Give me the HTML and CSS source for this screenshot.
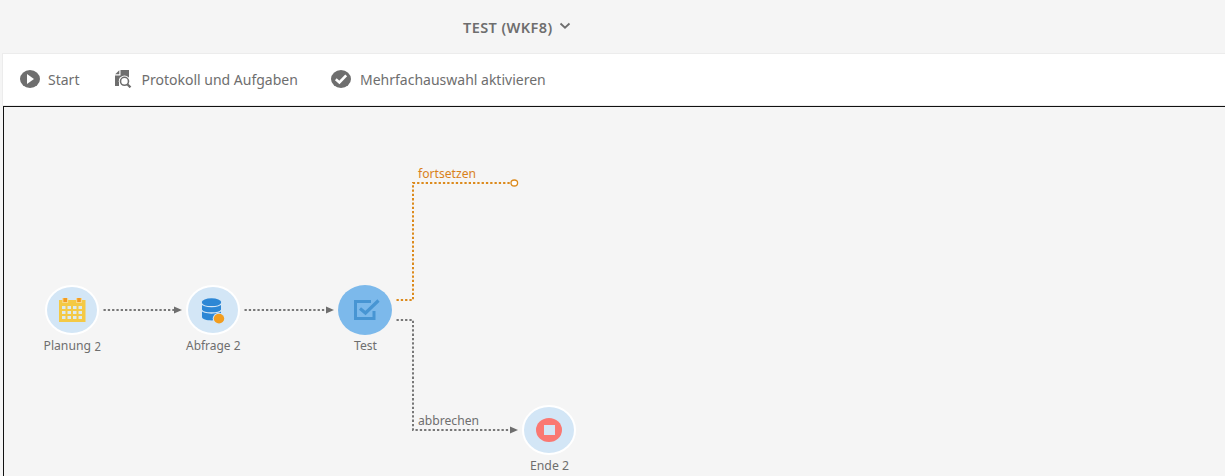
FILE: index.html
```html
<!DOCTYPE html>
<html lang="de">
<head>
<meta charset="utf-8">
<title>TEST (WKF8)</title>
<link rel="stylesheet" href="styles.css">
</head>
<body>
<div class="app">
  <header class="header">
    <span class="title">TEST (WKF8)</span>
    <svg class="chevron" width="12" height="8" viewBox="0 0 12 8"><path d="M1.500 1.500L6 5.700L10.500 1.500" fill="none" stroke="#6e6e6e" stroke-width="1.800"/></svg>
  </header>
  <nav class="toolbar">
    <div class="tool tool-start">
      <svg width="20" height="18" viewBox="0 0 20 18"><ellipse cx="10" cy="9" rx="10" ry="9" fill="#6e6e6e"/><path d="M7 4L14 9L7 14Z" fill="#fff"/></svg>
      <span class="label">Start</span>
    </div>
    <div class="tool tool-log">
      <svg width="18" height="18" viewBox="0 0 18 18"><path d="M6.500 0H15V9L10 6L5 9V16H1V5.500H6.500Z" fill="#6e6e6e"/><path d="M1.200 4.300L5.300 .3V4.300Z" fill="#6e6e6e"/><circle cx="10.500" cy="11.300" r="5.700" fill="#fff"/><circle cx="10.500" cy="11.300" r="4" fill="#fff" stroke="#6e6e6e" stroke-width="1.600"/><path d="M13.300 14.200L16.500 17.400" stroke="#6e6e6e" stroke-width="2.300"/></svg>
      <span class="label">Protokoll und Aufgaben</span>
    </div>
    <div class="tool tool-multi">
      <svg width="20" height="18" viewBox="0 0 20 18"><ellipse cx="10" cy="9" rx="10" ry="9" fill="#6e6e6e"/><path d="M4.800 9.300L8.400 12.500L15.200 5.300" fill="none" stroke="#fff" stroke-width="2.600"/></svg>
      <span class="label">Mehrfachauswahl aktivieren</span>
    </div>
  </nav>
  <main class="canvas">
    <svg class="diagram" width="1221" height="369" viewBox="4 107 1221 369">
      <g class="link">
        <path d="M103.500 310H174"/><path d="M244.500 310H326"/>
        <path d="M396.500 320H413V430H510"/>
      </g>
      <g class="arrow"><path d="M174 306.500L182 310L174 313.500Z"/><path d="M326 306.500L334 310L326 313.500Z"/><path d="M510 426.500L518 430L510 433.500Z"/></g>
      <path class="link-active" d="M396.500 300H413V183H511"/>
      <ellipse class="port" cx="514.300" cy="183" rx="3.300" ry="3"/>
      <g class="node">
        <ellipse cx="72" cy="310" rx="26" ry="24"/>
        <ellipse cx="213" cy="310" rx="26" ry="24"/>
        <ellipse cx="549" cy="430" rx="26" ry="24"/>
      </g>
      <ellipse cx="365" cy="310" rx="27" ry="25" fill="#7cb9eb"/>
      <g>
        <path d="M59 300H85.500V322H59Z" fill="#f4c945"/>
        <path d="M62.200 298H68.200V303H62.200ZM76 298H82V303H76Z" fill="#f8d98a"/>
        <path d="M63.400 298H67V302H63.400ZM77.200 298H80.800V302H77.200Z" fill="#f29a23"/>
        <path d="M62 306h3.500v3h-3.500zm5.500 0h3.500v3h-3.500zm5.500 0h3.500v3h-3.500zm5.500 0h3.500v3h-3.500zM62 311h3.500v3h-3.500zm5.500 0h3.500v3h-3.500zm5.500 0h3.500v3h-3.500zm5.500 0h3.500v3h-3.500zM62 316h3.500v3h-3.500zm5.500 0h3.500v3h-3.500zm5.500 0h3.500v3h-3.500zm5.500 0h3.500v3h-3.500z" fill="#dceaf0"/>
      </g>
      <g>
        <path d="M202 302V317C202 321.500 221 321.500 221 317V302Z" fill="#2d87d5"/>
        <ellipse cx="211.500" cy="302" rx="9.700" ry="3.700" fill="#2d87d5"/>
        <path d="M201.500 303.500C204 307.700 219 307.700 221.500 303.500M201.500 310C204 314 219 314 221.500 310" fill="none" stroke="#d3e6f6" stroke-width="1.300"/>
        <ellipse cx="219" cy="318.600" rx="6.300" ry="5.900" fill="#d3e6f6"/><ellipse cx="219" cy="318.600" rx="5.200" ry="4.900" fill="#f29d1f"/>
      </g>
      <path d="M371 301.500H355.500V318.500H374V311" fill="none" stroke="#4795d3" stroke-width="3"/>
      <path d="M360 308.500L365.500 313L378.500 300.500" fill="none" stroke="#4795d3" stroke-width="3.200"/>
      <ellipse cx="549" cy="430" rx="13" ry="12" fill="#fa7872"/>
      <rect x="544" y="425" width="11" height="10" fill="#d3e6f6"/>
      <g class="caption">
        <text x="43.500" y="350" textLength="47.500" lengthAdjust="spacingAndGlyphs">Planung</text><text x="94.500" y="351" textLength="6.500" lengthAdjust="spacingAndGlyphs">2</text>
        <text x="186" y="350" textLength="54.500" lengthAdjust="spacingAndGlyphs">Abfrage 2</text>
        <text x="354" y="350" textLength="23" lengthAdjust="spacingAndGlyphs">Test</text>
        <text x="530" y="470" textLength="39" lengthAdjust="spacingAndGlyphs">Ende 2</text>
        <text x="418" y="425" textLength="61" lengthAdjust="spacingAndGlyphs">abbrechen</text>
        <text class="caption-active" x="418" y="178" textLength="58" lengthAdjust="spacingAndGlyphs">fortsetzen</text>
      </g>
    </svg>
  </main>
</div>
</body>
</html>
```
FILE: styles.css
```css
* { box-sizing: border-box; }
body { margin: 0; background: #f5f5f5; color: #6e6e6e; font-family: "Noto Sans", "Open Sans", sans-serif; overflow: hidden; }
.app { display: flex; flex-direction: column; width: 1225px; height: 476px; }
.header { display: flex; align-items: center; gap: 6px; height: 53px; padding-left: 463px; }
.title { font-size: 14.5px; font-weight: 600; letter-spacing: .42px; line-height: 18px; white-space: nowrap; width: 90px; }
.chevron { margin-bottom: 2px; }
.toolbar { display: flex; height: 53px; margin-left: 2px; padding: 16px 0 0 18px; background: #fff; border-top: 1px solid #ececec; border-left: 1px solid #ececec; border-bottom: 1px solid #ececec; }
.tool { display: flex; height: 18px; }
.tool svg { flex: none; }
.tool-start { width: 94px; gap: 8px; margin-left: -1px; }
.tool-log { width: 217px; gap: 9.5px; }
.tool-multi { gap: 9px; }
.label { font-size: 14px; line-height: 20px; white-space: nowrap; }
.canvas { flex: 1; margin-left: 3px; border-top: 1px solid #111; border-left: 1px solid #111; overflow: hidden; }
.diagram { display: block; }
.link path, .link-active { fill: none; stroke: #777; stroke-width: 2; stroke-dasharray: 2.3 2; }
.link-active { stroke: #dc8a1c; }
.arrow path { fill: #6e6e6e; }
.port { fill: #fff; stroke: #dc8a1c; stroke-width: 1.3; }
.node ellipse { fill: #d3e6f6; stroke: #fff; stroke-width: 2; }
.caption text { fill: #6e6e6e; font-size: 12.5px; }
.caption .caption-active { fill: #d9811a; }
```
